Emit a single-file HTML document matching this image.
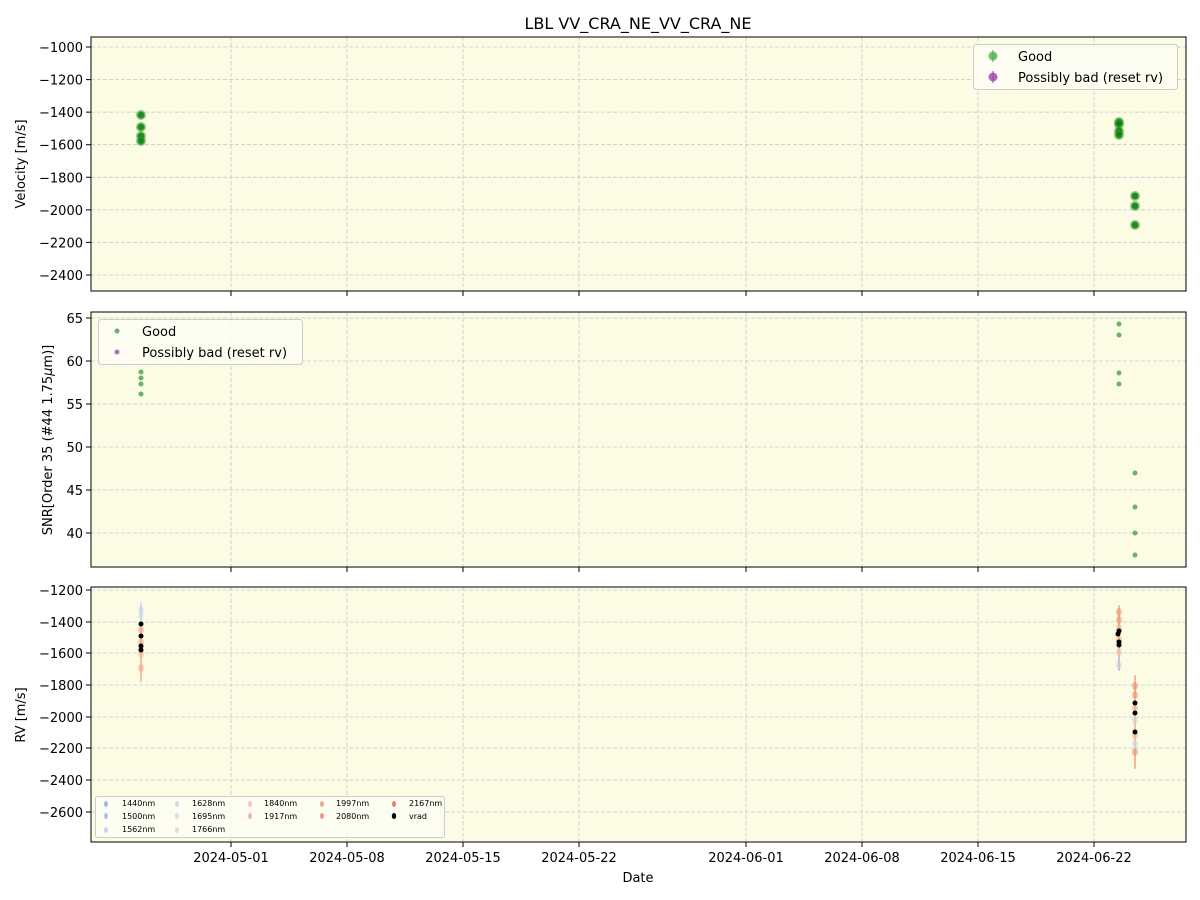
<!DOCTYPE html>
<html><head><meta charset="utf-8"><style>
body{margin:0;background:#fff}
svg{display:block;font-family:"DejaVu Sans","Liberation Sans",sans-serif}
.g{stroke:#c4c8d8;stroke-width:0.8;stroke-dasharray:4,2}
.t{font-size:13px;fill:#000}
</style></head><body>
<svg width="1200" height="900" viewBox="0 0 1200 900" xmlns="http://www.w3.org/2000/svg">
<text x="638" y="29" text-anchor="middle" style="font-size:16px">LBL VV_CRA_NE_VV_CRA_NE</text>

<rect x="91" y="37" width="1095" height="254" fill="#fcfbe3"/>
<rect x="91" y="312" width="1095" height="255" fill="#fcfbe3"/>
<rect x="91" y="587" width="1095" height="255" fill="#fcfbe3"/>

<g class="g">
<path d="M231 37V291M347 37V291M463 37V291M579 37V291M746 37V291M862 37V291M978 37V291M1094 37V291"/>
<path d="M231 312V567M347 312V567M463 312V567M579 312V567M746 312V567M862 312V567M978 312V567M1094 312V567"/>
<path d="M231 587V842M347 587V842M463 587V842M579 587V842M746 587V842M862 587V842M978 587V842M1094 587V842"/>
<path d="M91 47H1186M91 79.6H1186M91 112.1H1186M91 144.7H1186M91 177.3H1186M91 209.9H1186M91 242.4H1186M91 275H1186"/>
<path d="M91 318H1186M91 361H1186M91 404H1186M91 447H1186M91 490H1186M91 533H1186"/>
<path d="M91 590H1186M91 622H1186M91 653H1186M91 685H1186M91 717H1186M91 748H1186M91 780H1186M91 812H1186"/>
</g>

<g fill="none" stroke="#000" stroke-width="1">
<rect x="91" y="37" width="1095" height="254"/>
<rect x="91" y="312" width="1095" height="255"/>
<rect x="91" y="587" width="1095" height="255"/>
</g>

<g stroke="#000" stroke-width="1">
<path d="M231 291v5M347 291v5M463 291v5M579 291v5M746 291v5M862 291v5M978 291v5M1094 291v5"/>
<path d="M231 567v5M347 567v5M463 567v5M579 567v5M746 567v5M862 567v5M978 567v5M1094 567v5"/>
<path d="M231 842v5M347 842v5M463 842v5M579 842v5M746 842v5M862 842v5M978 842v5M1094 842v5"/>
<path d="M86 47h5M86 79.6h5M86 112.1h5M86 144.7h5M86 177.3h5M86 209.9h5M86 242.4h5M86 275h5"/>
<path d="M86 318h5M86 361h5M86 404h5M86 447h5M86 490h5M86 533h5"/>
<path d="M86 590h5M86 622h5M86 653h5M86 685h5M86 717h5M86 748h5M86 780h5M86 812h5"/>
</g>

<g class="t" text-anchor="end">
<text x="83" y="52">−1000</text><text x="83" y="84.6">−1200</text><text x="83" y="117.1">−1400</text><text x="83" y="149.7">−1600</text><text x="83" y="182.3">−1800</text><text x="83" y="214.9">−2000</text><text x="83" y="247.4">−2200</text><text x="83" y="280">−2400</text>
<text x="83" y="323">65</text><text x="83" y="366">60</text><text x="83" y="409">55</text><text x="83" y="452">50</text><text x="83" y="495">45</text><text x="83" y="538">40</text>
<text x="83" y="595">−1200</text><text x="83" y="627">−1400</text><text x="83" y="658">−1600</text><text x="83" y="690">−1800</text><text x="83" y="722">−2000</text><text x="83" y="753">−2200</text><text x="83" y="785">−2400</text><text x="83" y="817">−2600</text>
</g>
<g class="t" text-anchor="middle">
<text x="231" y="862">2024-05-01</text><text x="347" y="862">2024-05-08</text><text x="463" y="862">2024-05-15</text><text x="579" y="862">2024-05-22</text><text x="746" y="862">2024-06-01</text><text x="862" y="862">2024-06-08</text><text x="978" y="862">2024-06-15</text><text x="1094" y="862">2024-06-22</text>
<text x="638" y="882">Date</text>
</g>
<g class="t" text-anchor="middle">
<text transform="translate(25 164) rotate(-90)">Velocity [m/s]</text>
<text transform="translate(52 440) rotate(-90)">SNR[Order 35 (#44 1.75<tspan font-style="italic">μ</tspan>m)]</text>
<text transform="translate(25 715) rotate(-90)">RV [m/s]</text>
</g>

<g fill="#0a7a0a" fill-opacity="0.9" stroke="#2a9a2a" stroke-opacity="0.5" stroke-width="3">
<circle cx="141" cy="115" r="3.5"/><circle cx="141" cy="127" r="3.5"/><circle cx="141" cy="136" r="3.5"/><circle cx="141" cy="141" r="3.5"/>
<circle cx="1119" cy="122" r="3.5"/><circle cx="1119" cy="124" r="3.5"/><circle cx="1119" cy="131" r="3.5"/><circle cx="1119" cy="135" r="3.5"/>
<circle cx="1135" cy="196" r="3.5"/><circle cx="1135" cy="206" r="3.5"/><circle cx="1135" cy="225" r="3.5"/>
</g>
<rect x="973.5" y="44.5" width="204" height="45" rx="3" fill="#fdfdf5" fill-opacity="0.85" stroke="#ccc"/>
<line x1="993" y1="50" x2="993" y2="62" stroke="#4caf50"/><circle cx="993" cy="56" r="4.5" fill="#4caf50" fill-opacity="0.8"/>
<line x1="993" y1="71" x2="993" y2="83" stroke="#a040b0"/><circle cx="993" cy="77" r="4.5" fill="#a040b0" fill-opacity="0.8"/>
<text class="t" x="1018" y="61">Good</text><text class="t" x="1018" y="82">Possibly bad (reset rv)</text>

<g fill="#3a9a3a" fill-opacity="0.75">
<circle cx="141" cy="372" r="2.5"/><circle cx="141" cy="378" r="2.5"/><circle cx="141" cy="384" r="2.5"/><circle cx="141" cy="394" r="2.5"/>
<circle cx="1119" cy="324" r="2.5"/><circle cx="1119" cy="335" r="2.5"/><circle cx="1119" cy="373" r="2.5"/><circle cx="1119" cy="384" r="2.5"/>
<circle cx="1135" cy="473" r="2.5"/><circle cx="1135" cy="507" r="2.5"/><circle cx="1135" cy="533" r="2.5"/><circle cx="1135" cy="555" r="2.5"/>
</g>
<rect x="98.5" y="319.5" width="204" height="45" rx="3" fill="#fdfdf5" fill-opacity="0.85" stroke="#ccc"/>
<circle cx="117" cy="331" r="2.5" fill="#3a9a3a" fill-opacity="0.75"/><circle cx="117" cy="352" r="2.5" fill="#a040b0" fill-opacity="0.75"/>
<text class="t" x="142" y="336">Good</text><text class="t" x="142" y="357">Possibly bad (reset rv)</text>

<g stroke-width="2" stroke-opacity="0.6" stroke-linecap="round">
<line x1="141" y1="603" x2="141" y2="630" stroke="#b8cdee"/>
<line x1="141" y1="625" x2="141" y2="680" stroke="#f0a890"/>
<line x1="141" y1="640" x2="141" y2="682" stroke="#f4b8a0"/>
<line x1="1119" y1="606" x2="1119" y2="670" stroke="#ee9070"/>
<line x1="1119" y1="650" x2="1119" y2="670" stroke="#b8cdee"/>
<line x1="1135" y1="676" x2="1135" y2="768" stroke="#ee8a6a"/>
<line x1="1135" y1="700" x2="1135" y2="750" stroke="#dcd0c8"/>
</g>
<g fill-opacity="0.55">
<ellipse cx="141" cy="610" rx="2.5" ry="4" fill="#b8cdee"/><ellipse cx="141" cy="616" rx="2.5" ry="4" fill="#c8d4ee"/>
<ellipse cx="141" cy="630" rx="3" ry="4" fill="#f0a890"/><ellipse cx="141" cy="642" rx="3" ry="4" fill="#f0a890"/>
<ellipse cx="141" cy="654" rx="3" ry="4" fill="#f4b8a0"/><ellipse cx="141" cy="668" rx="3" ry="4" fill="#f0a890"/>
<ellipse cx="1119" cy="612" rx="3" ry="4" fill="#ee9070"/><ellipse cx="1119" cy="620" rx="3" ry="4" fill="#ee9070"/>
<ellipse cx="1119" cy="628" rx="3" ry="4" fill="#f0a890"/><ellipse cx="1119" cy="640" rx="3" ry="4" fill="#f0a890"/>
<ellipse cx="1119" cy="652" rx="3" ry="4" fill="#f4b8a0"/><ellipse cx="1119" cy="665" rx="2.5" ry="4" fill="#b8cdee"/>
<ellipse cx="1135" cy="686" rx="3" ry="4" fill="#ee8a6a"/><ellipse cx="1135" cy="695" rx="3" ry="4" fill="#ee8a6a"/>
<ellipse cx="1135" cy="708" rx="3" ry="4" fill="#f0a890"/><ellipse cx="1135" cy="720" rx="3" ry="4" fill="#dcd0c8"/>
<ellipse cx="1135" cy="735" rx="3" ry="4" fill="#f0a890"/><ellipse cx="1135" cy="744" rx="3" ry="4" fill="#c8d4ee"/>
<ellipse cx="1135" cy="752" rx="3" ry="4" fill="#ee8a6a"/>
</g>
<g fill="#000">
<circle cx="141" cy="624" r="2.5"/><circle cx="141" cy="636" r="2.5"/><circle cx="141" cy="646" r="2.5"/><circle cx="141" cy="650" r="2.5"/>
<circle cx="1119" cy="631" r="2.5"/><circle cx="1118" cy="634" r="2.5"/><circle cx="1119" cy="642" r="2.5"/><circle cx="1119" cy="645" r="2.5"/>
<circle cx="1135" cy="703" r="2.5"/><circle cx="1135" cy="713" r="2.5"/><circle cx="1135" cy="732" r="2.5"/>
</g>
<rect x="95.5" y="796.5" width="349" height="41" rx="2" fill="#fdfdf5" fill-opacity="0.85" stroke="#ccc"/>
<g style="font-size:8px" fill="#000">
<text x="122" y="806">1440nm</text><text x="122" y="819">1500nm</text><text x="122" y="832">1562nm</text>
<text x="192" y="806">1628nm</text><text x="192" y="819">1695nm</text><text x="192" y="832">1766nm</text>
<text x="264" y="806">1840nm</text><text x="264" y="819">1917nm</text>
<text x="336" y="806">1997nm</text><text x="336" y="819">2080nm</text>
<text x="409" y="806">2167nm</text><text x="409" y="819">vrad</text>
</g>
<g>
<ellipse cx="106" cy="804" rx="2" ry="3" fill="#9bb8ee"/><ellipse cx="106" cy="816" rx="2" ry="3" fill="#aac4f0"/><ellipse cx="106" cy="830" rx="2" ry="3" fill="#c4d4f0"/>
<ellipse cx="177" cy="804" rx="2" ry="3" fill="#d0d8ea"/><ellipse cx="177" cy="816" rx="2" ry="3" fill="#dcdcdc"/><ellipse cx="177" cy="830" rx="2" ry="3" fill="#ecd8d0"/>
<ellipse cx="250" cy="804" rx="2" ry="3" fill="#f4c8b4"/><ellipse cx="250" cy="816" rx="2" ry="3" fill="#f4b8a0"/>
<ellipse cx="322" cy="804" rx="2" ry="3" fill="#f0a890"/><ellipse cx="322" cy="816" rx="2" ry="3" fill="#ee9a80"/>
<ellipse cx="394" cy="804" rx="2" ry="3" fill="#e8806a"/><ellipse cx="394" cy="816" rx="2.2" ry="3" fill="#000"/>
</g>
</svg>
</body></html>
